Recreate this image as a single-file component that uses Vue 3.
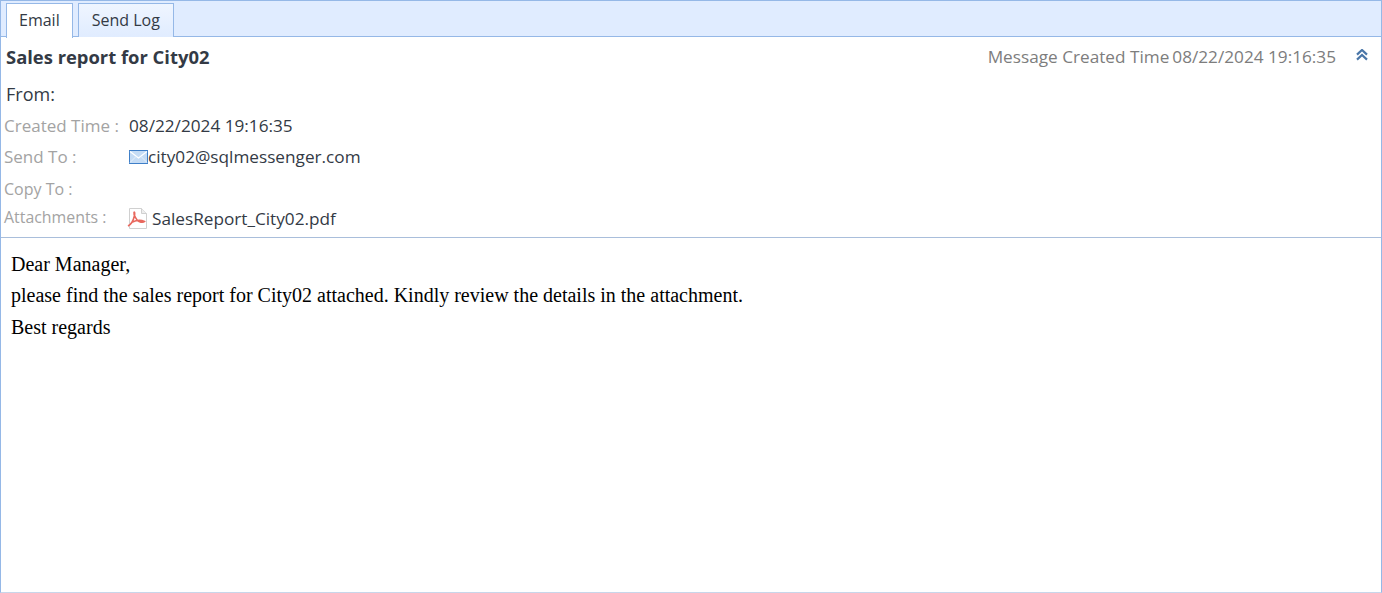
<template>
  <div class="window">
    <div class="tabbar">
      <div class="tab active">Email</div>
      <div class="tab log">Send Log</div>
    </div>
    <div class="header">
      <div class="title-row">
        <div class="subject">Sales report for City02</div>
        <div class="created-right">
          <span class="created-label">Message Created Time</span>
          <span class="created-value">08/22/2024 19:16:35</span>
          <svg class="collapse" width="12" height="12" viewBox="0 0 12 12" aria-hidden="true">
            <path d="M1 5.600 6 1l5 4.600M1 10.600 6 6l5 4.600" fill="none" stroke="#4a76a8" stroke-width="2.200"/>
          </svg>
        </div>
      </div>
      <div class="from">From:</div>
      <div v-for="row in rows" :key="row.label" class="row" :class="row.cls">
        <div class="label">{{ row.label }}</div>
        <div class="value">
          <svg v-if="row.icon === 'mail'" class="mail" width="19" height="14" viewBox="0 0 19 14" aria-hidden="true">
            <rect x=".5" y=".5" width="18" height="13" fill="#c5dcf5" stroke="#3f7fc8"/>
            <path d="M1 1.500 9.500 8 18 1.500" fill="none" stroke="#fff" stroke-width="1.200"/>
            <path d="M1 12.500 7 6.500M18 12.500 12 6.500" fill="none" stroke="#e4f0fb"/>
          </svg>
          <svg v-if="row.icon === 'pdf'" class="pdf" width="21" height="21" viewBox="0 0 21 21" aria-hidden="true">
            <path d="M2.500.5h12l5 5v15h-17z" fill="#fff" stroke="#d0d0d0"/>
            <path d="M14.500.5v5h5" fill="#eee" stroke="#d0d0d0"/>
            <path d="M1 18c3-1.500 5.500-6 6.500-10.500C8 5 7.500 3.500 7 4.500c-.5 2 2.500 8 5 9s5 .5 5.500 0c-3-1.500-8-1.500-12 .5" fill="none" stroke="#e8685e" stroke-width="1.600"/>
          </svg>
          <span>{{ row.value }}</span>
        </div>
      </div>
    </div>
    <div class="body">
      <p>Dear Manager,</p>
      <p>please find the sales report for City02 attached. Kindly review the details in the attachment.</p>
      <p>Best regards</p>
    </div>
  </div>
</template>

<script setup>
const rows = [
  { label: 'Created Time :', value: '08/22/2024 19:16:35', cls: 'r-created' },
  { label: 'Send To :', value: 'city02@sqlmessenger.com', icon: 'mail', cls: 'r-send' },
  { label: 'Copy To :', value: '', cls: 'r-copy' },
  { label: 'Attachments :', value: 'SalesReport_City02.pdf', icon: 'pdf', cls: 'r-attach' }
]
</script>

<style>
html, body { margin: 0; background: #fff; }
</style>

<style scoped>
.window {
  box-sizing: border-box;
  height: 593px;
  border: 1px solid #95b8e7;
  border-bottom-color: #c8d6ea;
  background: #fff;
  font-family: "Open Sans", "Noto Sans", sans-serif;
  color: #333a45;
  overflow: hidden;
}
.tabbar {
  box-sizing: border-box;
  height: 36px;
  padding: 2px 0 0 5px;
  display: flex;
  gap: 5px;
  background: #e0ecff;
  border-bottom: 1px solid #95b8e7;
}
.tab {
  box-sizing: border-box;
  height: 34px;
  padding: 0 12px;
  line-height: 33px;
  font-size: 16px;
  border: 1px solid #95b8e7;
  border-bottom: 0;
  background: linear-gradient(#eff5ff, #e0ecff);
}
.tab.log { padding: 0 13px; }
.tab.active {
  height: 35px;
  background: #fff;
}
.header {
  box-sizing: border-box;
  height: 201px;
  border-bottom: 1px solid #a9bedb;
}
.title-row {
  height: 39px;
  display: flex;
  justify-content: space-between;
  align-items: center;
  padding: 0 13px 1px 5px;
}
.subject {
  font-size: 18.400px;
  font-weight: 700;
}
.created-right {
  display: flex;
  align-items: center;
  font-size: 17.200px;
  color: #7d7d7d;
}
.created-value { margin-left: 3px; }
.collapse { margin-left: 20px; margin-top: -3px; }
.from {
  height: 34px;
  line-height: 34px;
  padding-left: 5px;
  font-size: 18px;
}
.row {
  display: flex;
  align-items: center;
  padding-left: 3px;
  position: relative;
  top: -1px;
}
.label {
  width: 125px;
  flex: none;
  font-size: 17px;
  color: #a3a3a3;
}
.value {
  display: flex;
  align-items: center;
  font-size: 17.200px;
}
.r-created { height: 31px; }
.r-send { height: 31.500px; }
.r-copy { height: 32px; }
.r-copy .label { font-size: 16px; }
.r-attach { height: 28px; }
.r-attach .label { margin-top: -4px; font-size: 15.900px; }
.pdf { margin: 0 4px 0 -2px; }
.body {
  padding: 10.700px 10px 0;
  font-family: "Liberation Serif", "Times New Roman", serif;
  font-size: 20px;
  color: #000;
}
.body p {
  margin: 0;
  line-height: 31.500px;
}
</style>
